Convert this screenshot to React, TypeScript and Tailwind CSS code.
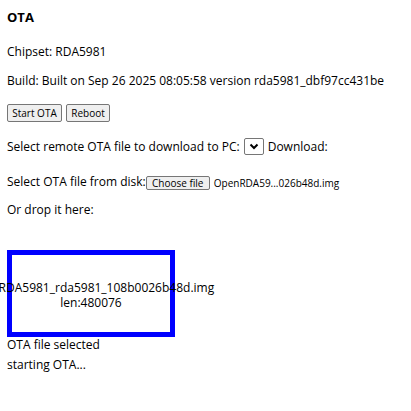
export default function App() {
  return (
    <div className="min-h-[411px] bg-white pl-[7px] text-black font-['Open_Sans',sans-serif] text-[12px] leading-[16px]">
      <div className="pt-[9px] text-[13px] font-bold leading-[16px]">OTA</div>
      <div className="mt-[19px] whitespace-nowrap">Chipset: RDA5981</div>
      <div className="mt-[13px] whitespace-nowrap">Build: Built on Sep 26 2025 08:05:58 version rda5981_dbf97cc431be</div>
      <div className="mt-[15px] flex gap-[4px]">
        <button className="flex h-[18px] w-[55px] items-center justify-center rounded-[2px] border border-[#767676] bg-[#efefef] text-[10px] leading-[12px]">
          Start OTA
        </button>
        <button className="flex h-[18px] w-[44px] items-center justify-center rounded-[2px] border border-[#767676] bg-[#efefef] text-[10px] leading-[12px]">
          Reboot
        </button>
      </div>
      <div className="mt-[16px] flex items-center whitespace-nowrap">
        <span>Select remote OTA file to download to PC:</span>
        <span className="ml-[4px] flex h-[17px] w-[20px] items-center justify-center rounded-[2px] border border-[#767676] bg-white">
          <svg width="10" height="7" viewBox="0 0 10 7">
            <path d="M1.5 1.5 L5 5 L8.5 1.5" fill="none" stroke="black" strokeWidth="2" />
          </svg>
        </span>
        <span className="ml-[4px]">Download:</span>
      </div>
      <div className="mt-[19px] flex items-start whitespace-nowrap">
        <span>Select OTA file from disk:</span>
        <span className="mt-[2px] flex h-[14px] w-[64px] items-center justify-center rounded-[2px] border border-[#767676] bg-[#efefef] text-[10px] leading-[12px]">
          Choose file
        </span>
        <span className="ml-[4px] mt-[2px] text-[10px] leading-[14px]">OpenRDA59...026b48d.img</span>
      </div>
      <div className="mt-[12px]">Or drop it here:</div>
      <div className="mt-[32px] flex h-[87px] w-[168px] flex-col items-center justify-center border-[5px] border-[#0000ff] pt-[2px] leading-[15px]">
        <div className="whitespace-nowrap">OpenRDA5981_rda5981_108b0026b48d.img</div>
        <div className="whitespace-nowrap">len:480076</div>
      </div>
      <div>OTA file selected</div>
      <div className="mt-[4px]">starting OTA...</div>
    </div>
  );
}
